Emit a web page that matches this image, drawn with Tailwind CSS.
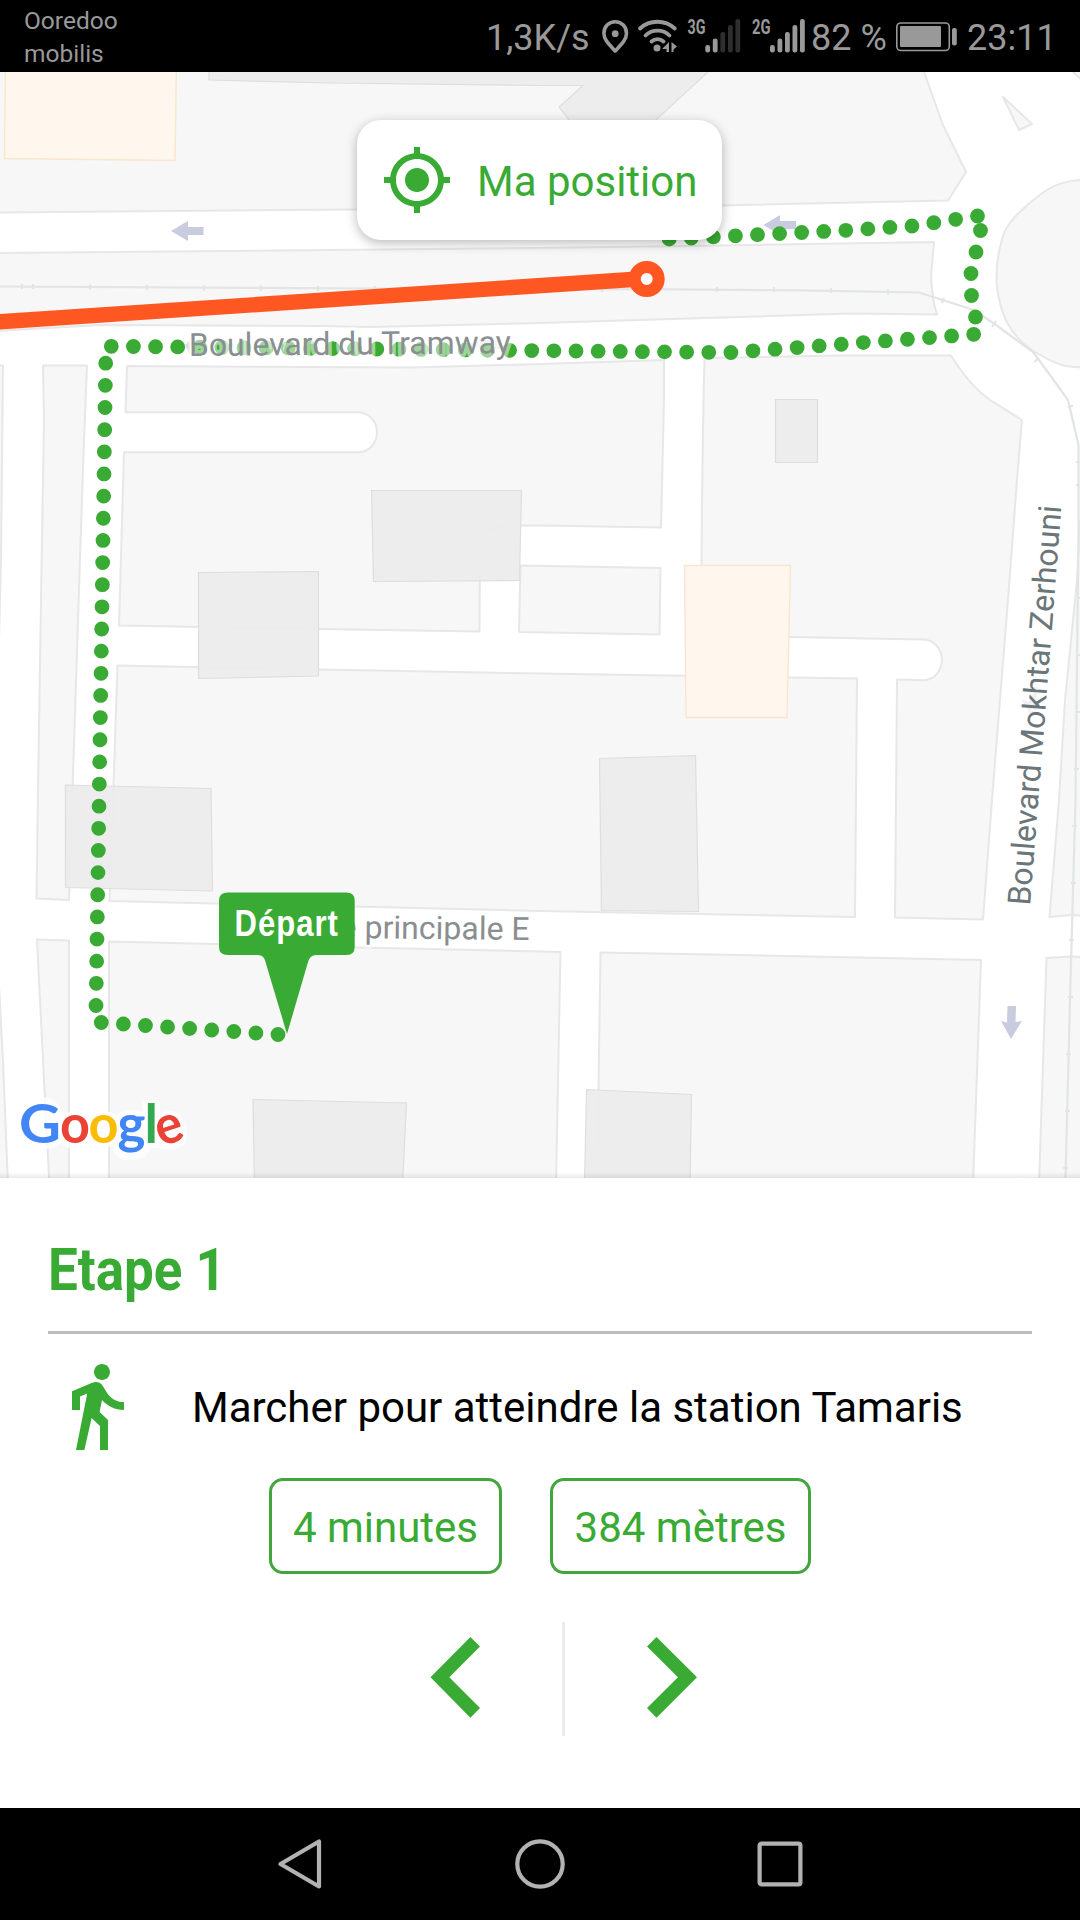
<!DOCTYPE html>
<html lang="fr">
<head>
<meta charset="utf-8">
<title>Etape 1</title>
<script src="https://cdn.jsdelivr.net/npm/@tailwindcss/browser@4"></script>
</head>
<body class="w-[1080px] h-[1920px] flex flex-col overflow-hidden bg-white font-['Roboto',sans-serif]">

<!-- Status bar -->
<header class="h-[72px] shrink-0 bg-black text-[#999] flex items-center pl-6 whitespace-nowrap">
  <div class="w-[463px] shrink-0 text-[24.5px] leading-[33px] pt-px">
    <div>Ooredoo</div>
    <div>mobilis</div>
  </div>
  <div class="w-[114px] shrink-0 text-[36px] leading-none pt-[4px] -ml-px mr-px">1,3K/s</div>
  <svg class="w-[211px] h-[72px] shrink-0" viewBox="601 0 211 72" fill="none">
    <path d="M615.2 21.7c-6.5 0-11.3 5-11.3 11.5 0 6.8 5.5 11.500 11.300 17.800 5.800-6.300 11.300-11 11.300-17.800 0-6.500-4.800-11.500-11.300-11.500z" stroke="#999" stroke-width="3.600" stroke-linejoin="round"/>
    <circle cx="615.2" cy="33.700" r="3.400" fill="#999"/>
    <g stroke="#999" stroke-width="3.800" stroke-linecap="round">
      <path d="M640 28.500C649.500 19.500 665 19.500 674.800 28.500"/>
      <path d="M645.500 35.500C652 29 663 29 669.500 35.500"/>
      <path d="M651.500 41.500C655 38.300 660 38.300 663.500 41.500"/>
    </g>
    <circle cx="657" cy="48" r="3.500" fill="#999"/>
    <path d="M669 42v10h-2.500v-3h-4.500zM671.500 42l5.500 4.500-3.500 3v2.500h-2z" fill="#999"/>
    <text x="687.500" y="34" font-size="20" font-weight="700" fill="#999" textLength="18" lengthAdjust="spacingAndGlyphs">3G</text>
    <g fill="#999">
      <rect x="705.300" y="45" width="4.800" height="7.500" rx="2.200"/>
      <rect x="712.800" y="38.500" width="4.800" height="14" rx="2.200"/>
    </g>
    <g fill="#2e2e2e">
      <rect x="720.400" y="32" width="4.800" height="20.500" rx="2.200"/>
      <rect x="728" y="25" width="4.800" height="27.500" rx="2.200"/>
      <rect x="735.400" y="19" width="4.800" height="33.500" rx="2.200"/>
    </g>
    <text x="752" y="34" font-size="20" font-weight="700" fill="#999" textLength="18.500" lengthAdjust="spacingAndGlyphs">2G</text>
    <g fill="#999">
      <rect x="770" y="45" width="4.800" height="7.500" rx="2.200"/>
      <rect x="777.500" y="38.500" width="4.800" height="14" rx="2.200"/>
      <rect x="785" y="32" width="4.800" height="20.500" rx="2.200"/>
      <rect x="792.500" y="25" width="4.800" height="27.500" rx="2.200"/>
      <rect x="800" y="19" width="4.800" height="33.500" rx="2.200"/>
    </g>
  </svg>
  <div class="w-[83px] shrink-0 text-[36px] leading-none pt-[4px] -ml-px">82 %</div>
  <svg class="w-[64px] h-[72px] shrink-0 ml-px" viewBox="895 0 64 72" fill="none">
    <rect x="896.800" y="23" width="52.500" height="27.500" rx="4" stroke="#999" stroke-width="1.600"/>
    <rect x="900" y="26" width="41" height="21" rx="1" fill="#999"/>
    <rect x="952" y="28" width="4.800" height="17.500" rx="2" fill="#999"/>
  </svg>
  <div class="shrink-0 text-[36px] leading-none pt-[4px] ml-2">23:11</div>
</header>

<!-- Map -->
<main class="relative h-[1106px] shrink-0 overflow-hidden">
  <svg class="block w-[1080px] h-[1106px]" viewBox="0 72 1080 1106" fill="none">
    <rect y="72" width="1080" height="1106" fill="#fff"/>
    <!-- city blocks -->
    <g fill="#f7f7f7" stroke="#e7e7e7" stroke-width="2" stroke-linejoin="round">
      <path d="M-5 60V212.500L357 209.500L722 205.500L948 200.500L966 172L943 125L924 72V60z"/>
      <path d="M1003 97L1019 130L1032 124z"/>
      <path d="M1072 71L1085 83V65z"/>
      <path d="M1085 179.500C1062 181 1050 186 1036 198C1012 217 1004 228 1001 243C996 262 995 284 1000 303C1006 330 1022 345 1040 355C1058 365 1066 368 1085 367z"/>
      <path d="M-5 253L380 249.500L540 248L722 245.500L934 242L931 275Q932 300 937 314.500L850 313.500L540 323L370 327L320 326L100 325L-5 331z"/>
      <path d="M-5 365.500H3L1 560L-3 720z"/>
      <path d="M-5 985H-1L3 1062L8 1185H-5z"/>
      <path d="M43 365.500H87L84 440L78 620L72.500 790L69 900L36.500 898.500L38 790L41 600L44 420z"/>
      <path d="M37 939.500L69 940.500V1185H49.500L45 1100z"/>
      <path d="M127 366L413 367.500L540 364L664 360V400L661 527.500L540 525.500H505Q483 527 480 548L479.500 631.500L319 629L119 625.500L124 452.300H358A19 20 0 0 0 358 412.300H125.500z"/>
      <path d="M520.500 565.500L660.500 568L659.500 634.500L519 632z"/>
      <path d="M704.500 358L840 355.500H951Q970 386 990 400L1022 420L1017 480L1008 600L992 800L983 919.500L895 917.500L897 679.500L924 680.300A18.500 20 0 0 0 922 639.500L790 637L701 635L702 500L703.500 400z"/>
      <path d="M117.500 665.500L320 669.500L540 673.500L857 678.500L855 917L540 911L355 906.500L215 903.500L109.500 901L113 800z"/>
      <path d="M109 941.500L215 944L360 947.500L540 951.500L560.500 952L556 1185H109z"/>
      <path d="M600.500 952.500L740 955L981 960L973 1185H596.500L598.500 1088z"/>
      <path d="M1085 520H1080L1077 580L1065 700L1059 800L1049.500 917L1072 915L1085 916z"/>
      <path d="M1046.500 958L1072 956.500L1085 957.500V1185H1039z"/>
    </g>
    <!-- tram rails -->
    <g stroke="#e2e4e5" stroke-width="2.200">
      <path d="M0 286.500L375 288.500L666 289.300L800 290.300L919 292.500L974 310L996 325L1033 352L1050 375L1068 400L1078.500 445V530L1075.500 800L1070 1000L1065.500 1178"/>
      <path d="M22 284v5M33 284v5M90 284.500v5M147 285v5M204 285.500v5M261 285.500v5M318 286v5M375 286v5M602 287v5M717 287v5M774 287v5M831 288v5M888 289.500v5M944 298l-2 5M996 321l-4 6M1039 358l-5 4M1068 407l5-1.500M1076 462h5M1076 485h5M1077 598h4M1076 655h4M1075 712h5M1074 769h5M1072 826h5M1071 883h5M1069 940h5M1068 997h5M1066 1054h5M1065 1111h5M1063 1168h5"/>
    </g>
    <!-- buildings -->
    <g fill="#ececec" fill-opacity=".93" stroke="#dedede" stroke-width="1.200">
      <path d="M209 60V80L330 83L540 85.500H583L559 107L569 120V130H645L708 72V60z"/>
      <path d="M371.500 490.500H521.500L519.500 580.500L373.500 581.500z"/>
      <path d="M198.500 572.500L318.500 571.500V676L198.500 678.500z"/>
      <path d="M65.500 785L211 788.500L212.500 891L65.500 887.500z"/>
      <path d="M775.500 399.500H817.500V462.500H775.500z"/>
      <path d="M599.500 758.500L695.500 755.500L698.500 911.500L601.500 910.500z"/>
      <path d="M253 1099.500L406.500 1103L402.500 1185H254.500z"/>
      <path d="M586.500 1089.500L691.500 1094.500L690 1185H584.500z"/>
    </g>
    <g fill="#fff7ed" fill-opacity=".96" stroke="#f9e6cd" stroke-width="1.400">
      <path d="M5.500 60L4.500 158.500L175 160.500L176.500 60z"/>
      <path d="M684.500 565.500H790.500L787 717.500H686z"/>
    </g>
    <!-- one-way arrows -->
    <g fill="#c9cbdf">
      <path d="M171 231L188 221V227H203.500V235H188V241z"/>
      <path d="M763.500 225L780 215V221H796V229L780 229.500V235z"/>
      <path d="M1007.500 1006H1016L1015.500 1022L1022 1021L1011 1039L1001 1021L1007 1022.500z"/>
      <path d="M185 345L190 340V354z" opacity=".7"/>
      <path d="M470 344L485 336V340H500V349H485V353z" opacity=".4"/>
      <path d="M1030 687H1037L1036 702L1042 701L1032 717L1022 700L1029 702z" opacity=".6"/>
    </g>
    <!-- walking route -->
    <g stroke="#39aa33" stroke-width="14.800" stroke-linecap="round">
      <path d="M278 1034.500L101 1022.500" stroke-dasharray="0 22.140"/>
      <path d="M96 1005.500L105.700 362.500" stroke-dasharray="0 22.150"/>
      <path d="M111.300 346.300L554 350.800L731 352.500L975 334.200" stroke-dasharray="0 22.130"/>
      <path d="M977.500 216L912 226L846 230.300L668 239.200" stroke-dasharray="0 22.100"/>
    </g>
    <g fill="#39aa33">
      <circle cx="975.500" cy="317" r="7.400"/><circle cx="971.500" cy="295.500" r="7.400"/><circle cx="971" cy="273.500" r="7.400"/><circle cx="976" cy="252" r="7.400"/><circle cx="980.500" cy="230.500" r="7.400"/>
    </g>
    <!-- tram line -->
    <path d="M-10 322.400L647 278.500" stroke="#ff5722" stroke-width="15.300"/>
    <circle cx="646.700" cy="279" r="12" fill="#fff" stroke="#ff5722" stroke-width="12"/>
    <!-- street names -->
    <g font-size="32" paint-order="stroke" stroke="#fff" stroke-opacity=".52" stroke-width="7" stroke-linejoin="round" fill="#8a8e91">
      <text transform="translate(189 356) rotate(-.5)" textLength="322" lengthAdjust="spacingAndGlyphs">Boulevard du Tramway</text>
      <text transform="translate(529.500 940) rotate(.6)" text-anchor="end">Rue principale E</text>
      <text transform="translate(1030 906) rotate(-85.500)" fill="#6b7679" textLength="401" lengthAdjust="spacingAndGlyphs">Boulevard Mokhtar Zerhouni</text>
    </g>
    <!-- departure marker -->
    <path d="M228 892.500H346.500Q354.700 892.500 354.700 900.500V947Q354.700 955 346.500 955H316Q310 955 308 962L287 1034L265.500 962Q264 955 258 955H228Q219 955 219 947V900.500Q219 892.500 228 892.500z" fill="#39aa33"/>
    <text transform="translate(234.500 935.500) scale(.84 1)" font-family="Liberation Sans, sans-serif" font-weight="700" font-size="37" fill="#fff" letter-spacing="1.200">Départ</text>
    <!-- attribution -->
    <g fill="#fff" fill-opacity=".75">
      <path d="M41 1097C25 1097 15 1109 15 1123S26 1149 41 1149C50 1149 56 1147 61 1144Q68 1150 78 1149Q90 1149 95 1145Q103 1150 113 1146Q112 1160 131 1160Q148 1160 150 1148H158Q170 1152 182 1146Q187 1143 186 1138Q189 1130 185 1122Q180 1111 169 1111Q163 1111 160 1114V1100H142V1112Q125 1107 117 1115Q103 1107 90 1115Q78 1107 66 1113L58 1112Q62 1108 58 1104Q52 1097 41 1097z"/>
    </g>
    <g font-family="Lato, sans-serif" font-size="54" font-weight="700">
      <text x="19" y="1143" fill="#4285f4" textLength="42" lengthAdjust="spacingAndGlyphs">G</text>
      <text x="60" y="1143" fill="#ea4335" textLength="30" lengthAdjust="spacingAndGlyphs">o</text>
      <text x="88.500" y="1143" fill="#fbbc05" textLength="30" lengthAdjust="spacingAndGlyphs">o</text>
      <text x="117.500" y="1143" fill="#4285f4" textLength="28" lengthAdjust="spacingAndGlyphs">g</text>
      <text x="144.500" y="1143" fill="#34a853">l</text>
      <text transform="rotate(-18 170 1130)" x="156" y="1143" fill="#ea4335" textLength="27" lengthAdjust="spacingAndGlyphs">e</text>
    </g>
  </svg>

  <button class="absolute left-[357px] top-[48px] w-[365px] h-[120px] rounded-[24px] bg-white shadow-[0_3px_12px_rgba(0,0,0,0.28)] flex items-center pl-6 text-[#39aa33]">
    <svg class="size-[72px]" viewBox="0 0 24 24" fill="currentColor"><path d="M12 8c-2.210 0-4 1.790-4 4s1.790 4 4 4 4-1.790 4-4-1.790-4-4-4zm8.940 3A8.994 8.994 0 0 0 13 3.060V1h-2v2.060A8.994 8.994 0 0 0 3.060 11H1v2h2.060A8.994 8.994 0 0 0 11 20.940V23h2v-2.060A8.994 8.994 0 0 0 20.940 13H23v-2h-2.060zM12 19c-3.870 0-7-3.130-7-7s3.130-7 7-7 7 3.130 7 7-3.130 7-7 7z"/></svg>
    <span class="text-[42px] leading-none ml-6 pt-[3px] whitespace-nowrap">Ma position</span>
  </button>
  <div class="absolute inset-x-0 bottom-0 h-[6px] bg-gradient-to-t from-black/8 to-transparent"></div>
</main>

<!-- Step panel -->
<section class="h-[630px] shrink-0 bg-white px-12 flex flex-col">
  <h1 class="h-[153px]">
    <svg class="block w-[240px] h-[153px]" viewBox="0 0 240 153"><text x="0" y="112" font-size="60" font-weight="700" fill="#39aa33" textLength="178" lengthAdjust="spacingAndGlyphs">Etape 1</text></svg>
  </h1>
  <div class="h-[3px] bg-[#bdbdbd]"></div>
  <div class="flex items-center mt-6 h-24">
    <svg class="size-24 shrink-0" viewBox="0 0 24 24" fill="#39aa33"><path d="M13.500 5.500c1.100 0 2-.9 2-2s-.9-2-2-2-2 .9-2 2 .9 2 2 2zM9.800 8.900L7 23h2.100l1.800-8 2.100 2v6h2v-7.500l-2.100-2 .6-3C14.800 12 16.800 13 19 13v-2c-1.900 0-3.500-1-4.300-2.400l-1-1.600c-.4-.6-1-1-1.700-1-.3 0-.5.1-.8.1L6 8.300V13h2V9.600l1.800-.7"/></svg>
    <p class="text-[42px] leading-none text-black ml-12 pt-[3px] whitespace-nowrap">Marcher pour atteindre la station Tamaris</p>
  </div>
  <div class="flex justify-center gap-12 mt-6 text-[42px] leading-none text-[#39aa33] whitespace-nowrap">
    <div class="w-[233px] h-24 border-3 border-[#43a53d] rounded-[14px] flex items-center justify-center pt-[3px]">4 minutes</div>
    <div class="w-[261px] h-24 border-3 border-[#43a53d] rounded-[14px] flex items-center justify-center pt-[3px]">384 mètres</div>
  </div>
  <div class="flex mt-12 h-[114px] pl-[370px]">
    <svg class="w-[144px] h-[114px]" viewBox="418 1622 144 114" fill="#39aa33"><path d="M470.400 1637L480 1646.500L449.300 1677.300L480 1708L470.400 1717.700L430.500 1677.300z"/></svg>
    <div class="w-[3px] bg-[#ececec]"></div>
    <svg class="w-[144px] h-[114px]" viewBox="565 1622 144 114" fill="#39aa33"><path d="M656.500 1637L647 1646.500L678 1677.300L647 1708L656.500 1717.700L697 1677.300z"/></svg>
  </div>
</section>

<!-- Navigation bar -->
<nav class="h-[112px] shrink-0 bg-black flex items-center justify-center gap-[180px]">
  <svg class="size-[60px]" viewBox="0 0 60 60" fill="none" stroke="#b2b2b2" stroke-width="4.200" stroke-linejoin="round"><path d="M49 7.500V52.500L10.500 30z"/></svg>
  <svg class="size-[60px]" viewBox="0 0 60 60" fill="none" stroke="#b2b2b2" stroke-width="4.200"><circle cx="30" cy="30" r="22.700"/></svg>
  <svg class="size-[60px]" viewBox="0 0 60 60" fill="none" stroke="#b2b2b2" stroke-width="4.200"><rect x="9.600" y="9.600" width="40.800" height="40.800" rx="2"/></svg>
</nav>
</body>
</html>
